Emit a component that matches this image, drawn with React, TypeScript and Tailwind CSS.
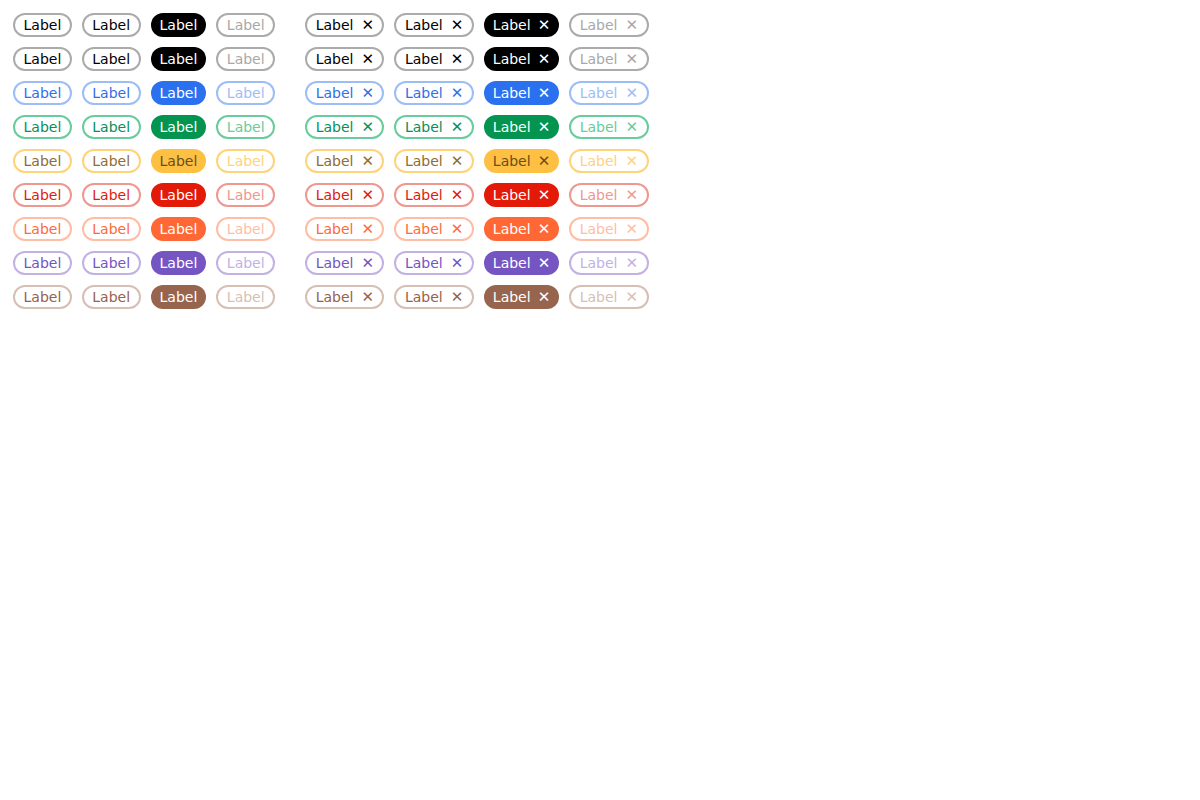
import React from "react";

type Tone = {
  border: string;
  text: string;
  fill: string;
  fillText: string;
  faint: string;
};

const tones: Tone[] = [
  { border: "border-[#ababab]", text: "text-black", fill: "bg-black", fillText: "text-white", faint: "text-[#a8a8a8]" },
  { border: "border-[#ababab]", text: "text-black", fill: "bg-black", fillText: "text-white", faint: "text-[#a8a8a8]" },
  { border: "border-[#9dbdf7]", text: "text-[#2f6fea]", fill: "bg-[#2b70ee]", fillText: "text-white", faint: "text-[#9dbdf7]" },
  { border: "border-[#68cc9c]", text: "text-[#06905a]", fill: "bg-[#03944f]", fillText: "text-white", faint: "text-[#68cc9c]" },
  { border: "border-[#fed379]", text: "text-[#8f6d2f]", fill: "bg-[#fec043]", fillText: "text-[#6a4d1b]", faint: "text-[#fed379]" },
  { border: "border-[#ee9890]", text: "text-[#e3190b]", fill: "bg-[#e21a07]", fillText: "text-white", faint: "text-[#ee9890]" },
  { border: "border-[#ffbda4]", text: "text-[#ff6a3a]", fill: "bg-[#ff6834]", fillText: "text-white", faint: "text-[#ffbda4]" },
  { border: "border-[#c1b2e3]", text: "text-[#7455c2]", fill: "bg-[#7455c2]", fillText: "text-white", faint: "text-[#c1b2e3]" },
  { border: "border-[#d6bfb4]", text: "text-[#96624d]", fill: "bg-[#97644d]", fillText: "text-white", faint: "text-[#d6bfb4]" },
];

function Chip({ tone, variant, removable }: { tone: Tone; variant: "outline" | "fill" | "faint"; removable?: boolean }) {
  const base = "inline-flex items-center h-6 rounded-full text-[14px] leading-none whitespace-nowrap";
  let cls = "";
  if (variant === "fill") cls = `${base} px-[9px] ${tone.fill} ${tone.fillText}`;
  else if (variant === "faint") cls = `${base} px-[8.5px] border-2 ${tone.border} ${tone.faint}`;
  else cls = `${base} px-[8.5px] border-2 ${tone.border} ${tone.text}`;
  return (
    <span className={cls}>
      <span>Label</span>
      {removable && (
        <span className={variant === "fill" ? "ml-[7px] text-[15px]" : "ml-[8px] text-[15px]"}>✕</span>
      )}
    </span>
  );
}

function Group({ removable }: { removable?: boolean }) {
  return (
    <div className="flex flex-col gap-[10px]">
      {tones.map((t, i) => (
        <div key={i} className="flex gap-[10px]">
          <Chip tone={t} variant="outline" removable={removable} />
          <Chip tone={t} variant="outline" removable={removable} />
          <Chip tone={t} variant="fill" removable={removable} />
          <Chip tone={t} variant="faint" removable={removable} />
        </div>
      ))}
    </div>
  );
}

export default function App() {
  return (
    <div className="w-[1200px] h-[800px] bg-white p-[13px] flex gap-[30px] items-start" style={{ fontFamily: '"DejaVu Sans", sans-serif' }}>
      <Group />
      <Group removable />
    </div>
  );
}
